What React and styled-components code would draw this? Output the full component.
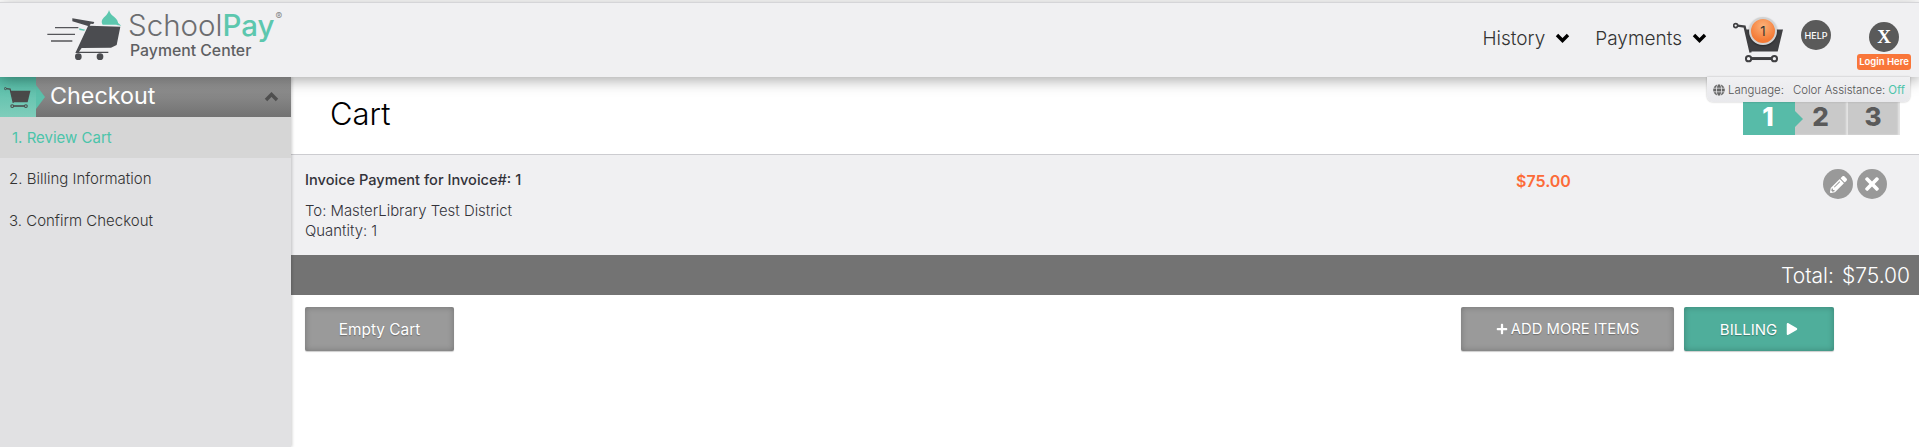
import React from "react";
import styled, { createGlobalStyle } from "styled-components";
import { FaPencilAlt, FaTimes, FaGlobe, FaPlus, FaPlay } from "react-icons/fa";

const Global = createGlobalStyle`
  html, body { margin: 0; padding: 0; background: #fff; }
  body { font-family: "Inter", "Open Sans", sans-serif; color: #444; }
  * { box-sizing: border-box; }
`;

const Page = styled.div`
  position: relative;
  width: 1919px;
  height: 447px;
  overflow: hidden;
  padding-top: 2px;
`;

const Header = styled.header`
  position: relative;
  z-index: 3;
  height: 75px;
  background: #f0f0f2;
  border-top: 1px solid #d5d5d8;
  box-shadow: 0 3px 14px rgba(0, 0, 0, 0.35);
  display: flex;
  align-items: center;
  justify-content: space-between;
  padding: 0 8px 0 40px;
`;

const Logo = styled.div`
  display: flex;
  align-items: flex-start;
  margin-top: -5px;
`;

const LogoText = styled.div`
  display: flex;
  flex-direction: column;
  margin-top: 3px;
`;

const LogoName = styled.div`
  font-size: 29.5px;
  line-height: 35px;
  margin-left: -2px;
  color: #6c6d70;
  font-weight: 300;
  white-space: nowrap;
  span { color: #5cc7ae; font-weight: 500; }
  sup { font-size: 10px; color: #888; vertical-align: 16px; line-height: 0; font-weight: 400; margin-left: 1px; }
`;

const LogoSub = styled.div`
  font-size: 15.8px;
  line-height: 16px;
  font-weight: 500;
  color: #5e5f62;
`;

const Nav = styled.nav`
  display: flex;
  align-items: center;
`;

const NavItem = styled.div`
  display: flex;
  align-items: center;
  gap: 10px;
  font-size: 19px;
  font-weight: 300;
  color: #333;
  margin-right: ${(p) => p.$mr}px;
  margin-top: -4px;
`;

const CartWrap = styled.div`
  position: relative;
  width: 70px;
  height: 60px;
  margin-right: 6px;
  padding: 10px 0 0 8px;
`;

const Badge = styled.div`
  position: absolute;
  left: 24px;
  top: 7px;
  width: 28px;
  height: 28px;
  border-radius: 50%;
  background: radial-gradient(circle at 50% 30%, #fbb27a, #f57a35 70%);
  border: 2px solid #d2d2d2;
  box-shadow: 0 1px 2px rgba(0, 0, 0, 0.4);
  font-size: 13px;
  color: #333;
  display: flex;
  align-items: center;
  justify-content: center;
`;

const Round = styled.div`
  width: 30px;
  height: 30px;
  border-radius: 50%;
  background: #5a5a5a;
  color: #fff;
  display: flex;
  align-items: center;
  justify-content: center;
`;

const HelpRound = styled(Round)`
  font-size: 9px;
  font-weight: 500;
  margin-top: -10px;
  margin-right: 26px;
`;

const LoginBox = styled.div`
  display: flex;
  flex-direction: column;
  align-items: center;
  margin-top: 11px;
`;

const XRound = styled(Round)`
  font-family: "Liberation Serif", serif;
  font-weight: 700;
  font-size: 19px;
`;

const LoginTag = styled.div`
  margin-top: 2px;
  width: 54px;
  height: 16px;
  border-radius: 3px;
  background: #f9763a;
  color: #fff;
  font-size: 9.5px;
  font-weight: 600;
  text-align: center;
  line-height: 16px;
  white-space: nowrap;
`;

const LangBox = styled.div`
  position: absolute;
  z-index: 4;
  left: 1707px;
  top: 77px;
  width: 203px;
  height: 25px;
  background: linear-gradient(#f0f0f2, #e9e9ec);
  border-radius: 0 0 6px 6px;
  box-shadow: 0 0 2px rgba(0, 0, 0, 0.3);
  display: flex;
  align-items: center;
  padding-left: 6px;
  font-size: 11.4px;
  font-weight: 300;
  color: #555;
  white-space: nowrap;
  svg { width: 12px; height: 12px; margin-right: 3px; color: #666; }
  b { font-weight: 300; margin-right: 9px; }
  i { font-style: normal; color: #4cc4aa; margin-left: 3px; font-weight: 400; }
`;

const Body = styled.div`
  display: flex;
  height: 370px;
`;

const Sidebar = styled.aside`
  width: 291px;
  background: #e1e1e3;
  box-shadow: 1px 0 3px rgba(0, 0, 0, 0.2);
  position: relative;
  z-index: 1;
`;

const SideHead = styled.div`
  height: 40px;
  background: linear-gradient(#9a9a9a, #727272);
  display: flex;
  align-items: center;
  justify-content: space-between;
  padding-right: 12px;
  color: #fff;
  font-size: 23.3px;
  font-weight: 400;
`;

const SideTitle = styled.div`
  display: flex;
  align-items: center;
  line-height: 34px;
`;

const TealTag = styled.div`
  position: relative;
  width: 36px;
  height: 40px;
  background: linear-gradient(#52bca6, #7fcdbb);
  display: flex;
  align-items: center;
  padding-left: 4px;
  margin-right: 14px;
  &::after {
    content: "";
    position: absolute;
    left: 36px;
    top: 8px;
    border-left: 9px solid #5cc0ab;
    border-top: 12px solid transparent;
    border-bottom: 12px solid transparent;
  }
`;

const CheckoutLabel = styled.span`
  margin-top: -2px;
`;

const SideStep = styled.div`
  height: ${(p) => (p.$active ? "41px" : "42px")};
  display: flex;
  align-items: center;
  padding-left: ${(p) => (p.$active ? "12px" : "9px")};
  padding-bottom: ${(p) => (p.$active ? "0" : "1px")};
  font-size: 15px;
  font-weight: ${(p) => (p.$active ? 400 : 300)};
  color: ${(p) => (p.$active ? "#4cc4aa" : "#333")};
  background: ${(p) => (p.$active ? "#d6d6d6" : "transparent")};
`;

const Main = styled.main`
  flex: 1;
`;

const TitleRow = styled.div`
  height: 78px;
  display: flex;
  justify-content: space-between;
  padding: 0 19px 0 39px;
  border-bottom: 1px solid #ccccd0;
`;

const Title = styled.h1`
  margin: 0;
  padding-top: 16px;
  font-size: 31px;
  line-height: 42px;
  font-weight: 300;
  color: #000;
`;

const Steps = styled.div`
  display: flex;
  height: 33px;
  margin-top: 25px;
`;

const Step = styled.div`
  position: relative;
  width: ${(p) => p.$w}px;
  background: ${(p) => (p.$on ? "#57bba8" : "#c9c9c9")};
  color: ${(p) => (p.$on ? "#fff" : "#5a5a5a")};
  box-shadow: ${(p) => (p.$on ? "none" : "inset -2px 0 2px rgba(255,255,255,.5)")};
  font-size: 26px;
  line-height: 30px;
  font-weight: 800;
  display: flex;
  align-items: center;
  justify-content: center;
  padding: 0 2px 3px 0;
  ${(p) =>
    p.$on &&
    `&::after {
      content: "";
      position: absolute;
      z-index: 1;
      left: 100%;
      top: 9px;
      border-left: 8px solid #57bba8;
      border-top: 8px solid transparent;
      border-bottom: 8px solid transparent;
    }`}
`;

const ItemRow = styled.div`
  height: 100px;
  background: #f0f0f2;
  display: grid;
  grid-template-columns: 1211px 307px 1fr;
  padding-left: 14px;
`;

const ItemInfo = styled.div`
  padding-top: 15px;
  font-size: 14.9px;
  color: #33333a;
  font-weight: 300;
`;

const ItemName = styled.div`
  font-size: 14.6px;
  font-weight: 500;
  line-height: 20px;
  margin-bottom: 11px;
`;

const ItemLine = styled.div`
  line-height: 20px;
`;

const Price = styled.div`
  padding-top: 15px;
  font-size: 16px;
  line-height: 22px;
  font-weight: 600;
  color: #fc6b38;
`;

const Actions = styled.div`
  display: flex;
  gap: 4px;
  padding-top: 14px;
`;

const ActionBtn = styled(Round)`
  background: #999;
  svg { width: ${(p) => p.$s}px; height: ${(p) => p.$s}px; }
`;

const TotalBar = styled.div`
  height: 40px;
  background: #737373;
  color: #fff;
  display: flex;
  align-items: center;
  justify-content: flex-end;
  gap: 8px;
  padding-right: 9px;
  font-size: 21px;
  font-weight: 300;
`;

const Buttons = styled.div`
  display: flex;
  padding: 12px 0 0 14px;
`;

const Button = styled.button`
  height: 44px;
  width: ${(p) => p.$w}px;
  margin-right: ${(p) => p.$mr || 0}px;
  border: 0;
  border-radius: 2px;
  font-family: inherit;
  font-size: ${(p) => p.$fs}px;
  color: #fff;
  text-shadow: 0 1px 1px rgba(0, 0, 0, 0.3);
  background: ${(p) => (p.$teal ? "#4fae9b" : "#9a9a9a")};
  box-shadow: inset 0 0 6px rgba(0, 0, 0, 0.25), 0 1px 1px rgba(0, 0, 0, 0.2);
  display: flex;
  align-items: center;
  justify-content: center;
  gap: ${(p) => p.$gap || 0}px;
  svg { width: 12px; height: 12px; }
`;

function Chevron({ up, color = "#000" }) {
  return (
    <svg width="15" height="10" viewBox="0 0 15 10">
      <polyline
        points={up ? "2,8 7.5,2.5 13,8" : "2,2 7.5,7.5 13,2"}
        fill="none"
        stroke={color}
        strokeWidth="3.4"
      />
    </svg>
  );
}

function LogoCart() {
  return (
    <svg width="90" height="65" viewBox="0 0 270 195">
      <path d="M207 15c3 9 6 14 15 20 8 6 14 14 12 24l-46 0c-6-10-1-18 6-24 7-6 11-12 13-20z" fill="#5cc7ae" />
      <path d="M230 50l14 12-14-2z" fill="#5cc7ae" />
      <path d="M118 70l18 4-4 3-14-2z" fill="#5cc7ae" />
      <path d="M97 40l66 11-3 6-8-1-3 6 92 3-11 55-17 8-88 1-8 11h88v4H106l38-81-47-14z" fill="#4b4c50" />
      <path d="M45 66h70v4H45zM22 86h83v4H22zM33 106h64v4H33z" fill="#55565a" />
      <circle cx="115" cy="155" r="10" fill="#4b4c50" />
      <circle cx="180" cy="155" r="10" fill="#4b4c50" />
    </svg>
  );
}

// viewBox follows the header cart crop, the sidebar one reuses it scaled down
function BigCart({ width = 53, height = 43, color = "#3f3f42" }) {
  return (
    <svg width={width} height={height} viewBox="25 25 160 130">
      <circle cx="33" cy="42" r="6" fill="none" stroke={color} strokeWidth="5" />
      <path d="M38 42l22 3 18 78" fill="none" stroke={color} strokeWidth="7" />
      <path d="M62 54h114l-16 66H78z" fill={color} />
      <circle cx="72" cy="142" r="8" fill="none" stroke={color} strokeWidth="6" />
      <circle cx="150" cy="142" r="8" fill="none" stroke={color} strokeWidth="6" />
      <rect x="80" y="137" width="62" height="9" fill={color} />
    </svg>
  );
}

export default function App() {
  return (
    <Page>
      <Global />
      <Header>
        <Logo>
          <LogoCart />
          <LogoText>
            <LogoName>
              School<span>Pay</span>
              <sup>®</sup>
            </LogoName>
            <LogoSub>Payment Center</LogoSub>
          </LogoText>
        </Logo>
        <Nav>
          <NavItem $mr={25}>
            History <Chevron />
          </NavItem>
          <NavItem $mr={18}>
            Payments <Chevron />
          </NavItem>
          <CartWrap>
            <BigCart />
            <Badge>1</Badge>
          </CartWrap>
          <HelpRound>HELP</HelpRound>
          <LoginBox>
            <XRound>X</XRound>
            <LoginTag>Login Here</LoginTag>
          </LoginBox>
        </Nav>
      </Header>
      <LangBox>
        <FaGlobe />
        <b>Language:</b> Color Assistance:<i>Off</i>
      </LangBox>
      <Body>
        <Sidebar>
          <SideHead>
            <SideTitle>
              <TealTag>
                <BigCart width={28} height={24} color="#4a4a4a" />
              </TealTag>
              <CheckoutLabel>Checkout</CheckoutLabel>
            </SideTitle>
            <Chevron up color="#4f4f4f" />
          </SideHead>
          <SideStep $active>1. Review Cart</SideStep>
          <SideStep>2. Billing Information</SideStep>
          <SideStep>3. Confirm Checkout</SideStep>
        </Sidebar>
        <Main>
          <TitleRow>
            <Title>Cart</Title>
            <Steps>
              <Step $on $w={52}>1</Step>
              <Step $w={53}>2</Step>
              <Step $w={52}>3</Step>
            </Steps>
          </TitleRow>
          <ItemRow>
            <ItemInfo>
              <ItemName>Invoice Payment for Invoice#: 1</ItemName>
              <ItemLine>To: MasterLibrary Test District</ItemLine>
              <ItemLine>Quantity: 1</ItemLine>
            </ItemInfo>
            <Price>$75.00</Price>
            <Actions>
              <ActionBtn $s={17}><FaPencilAlt /></ActionBtn>
              <ActionBtn $s={20}><FaTimes /></ActionBtn>
            </Actions>
          </ItemRow>
          <TotalBar>
            <span>Total:</span>
            <span>$75.00</span>
          </TotalBar>
          <Buttons>
            <Button $w={149} $mr={1007} $fs={15.4}>Empty Cart</Button>
            <Button $w={213} $mr={10} $fs={14.8} $gap={3}><FaPlus /> ADD MORE ITEMS</Button>
            <Button $teal $w={150} $fs={15} $gap={9}>BILLING <FaPlay /></Button>
          </Buttons>
        </Main>
      </Body>
    </Page>
  );
}
